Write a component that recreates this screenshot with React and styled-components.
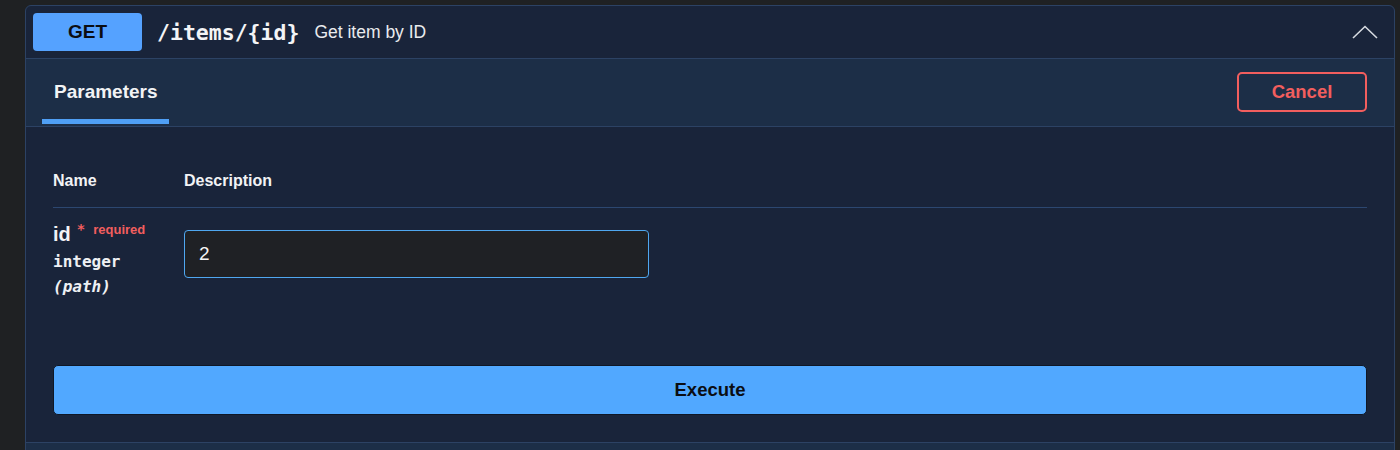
import React from 'react';
import styled, { createGlobalStyle } from 'styled-components';

const GlobalStyle = createGlobalStyle`
  html, body {
    margin: 0;
    padding: 0;
    background: #1f2123;
  }
  body {
    font-family: "Liberation Sans", Arial, sans-serif;
  }
`;

const Page = styled.div`
  padding: 5px 5px 0 25px;
  height: 450px;
  box-sizing: border-box;
  overflow: hidden;
`;

const Card = styled.div`
  border: 1px solid #2c4264;
  border-radius: 6px;
  background: #19243a;
  overflow: hidden;
`;

const Header = styled.div`
  display: flex;
  align-items: center;
  height: 52px;
  padding: 0 16px 0 7px;
  border-bottom: 1px solid #2c4264;
`;

const MethodBadge = styled.div`
  width: 109px;
  height: 38px;
  display: flex;
  align-items: center;
  justify-content: center;
  background: #55a2ff;
  border-radius: 4px;
  color: #0b0d12;
  font-weight: 700;
  font-size: 19px;
`;

const Path = styled.span`
  margin-left: 15px;
  font-family: "DejaVu Sans Mono", "Liberation Mono", monospace;
  font-weight: 700;
  font-size: 21.5px;
  color: #f3f4f6;
`;

const Summary = styled.span`
  margin-left: 15px;
  font-size: 17.5px;
  color: #e9ebee;
`;

const Chevron = styled.svg`
  margin-left: auto;
  width: 26px;
  height: 14px;
`;

const TabBar = styled.div`
  display: flex;
  align-items: stretch;
  height: 67px;
  padding: 0 27px 0 16px;
  background: #1c2e47;
  border-bottom: 1px solid #2c4264;
`;

const Tab = styled.div`
  display: flex;
  align-items: center;
  padding: 5px 11px 0 12px;
  margin-bottom: 2px;
  font-weight: 700;
  font-size: 19px;
  color: #f2f3f5;
  border-bottom: 5px solid ${p => (p.$active ? '#4f9ff5' : 'transparent')};
`;

const CancelButton = styled.button`
  margin: 13px 0 0 auto;
  width: 130px;
  height: 40px;
  background: transparent;
  border: 2px solid #f25e5e;
  border-radius: 5px;
  color: #f25e5e;
  font-family: "Liberation Sans", Arial, sans-serif;
  font-weight: 700;
  font-size: 18.5px;
  cursor: pointer;
`;

const Body = styled.div`
  padding: 0 27px 27px 27px;
`;

const HeadRow = styled.div`
  display: grid;
  grid-template-columns: 131px 1fr;
  padding: 44px 0 16px;
  border-bottom: 1px solid #2c4770;
`;

const HeadCell = styled.div`
  font-weight: 700;
  font-size: 16px;
  line-height: 20px;
  color: #f2f3f5;
`;

const ParamRow = styled.div`
  display: grid;
  grid-template-columns: 131px 1fr;
  padding-top: 14px;
`;

const ParamInfo = styled.div`
  display: flex;
  flex-direction: column;
`;

const ParamName = styled.div`
  font-weight: 700;
  font-size: 20px;
  line-height: 24px;
  color: #f2f3f5;
`;

const Required = styled.span`
  position: relative;
  top: -7px;
  margin-left: 6px;
  font-size: 13px;
  font-weight: 700;
  color: #f25e5e;
`;

const Star = styled.span`
  font-family: "DejaVu Sans Mono", monospace;
  font-size: 14px;
  margin-right: 8px;
`;

const ParamType = styled.div`
  margin-top: 1px;
  font-family: "DejaVu Sans Mono", "Liberation Mono", monospace;
  font-weight: 700;
  font-size: 16px;
  line-height: 24px;
  color: #eef0f3;
  font-style: ${p => (p.$italic ? 'italic' : 'normal')};
`;

const ValueInput = styled.input`
  margin-top: 8px;
  width: 465px;
  height: 48px;
  box-sizing: border-box;
  padding: 0 14px;
  background: #1f2125;
  border: 1px solid #4fa7f0;
  border-radius: 4px;
  color: #f5f5f5;
  font-family: "Liberation Sans", Arial, sans-serif;
  font-size: 19px;
  outline: none;
  caret-color: #ffffff;
`;

const ExecuteButton = styled.button`
  display: block;
  width: 100%;
  height: 50px;
  margin-top: 66px;
  background: #51a8ff;
  border: 1px solid #0f1726;
  border-radius: 5px;
  color: #0b0d12;
  font-family: "Liberation Sans", Arial, sans-serif;
  font-weight: 700;
  font-size: 18.5px;
  cursor: pointer;
`;

const NextSection = styled.div`
  height: 40px;
  background: #1c2e47;
  border-top: 1px solid #2c4264;
`;

export default function App() {
  return (
    <>
      <GlobalStyle />
      <Page>
        <Card>
          <Header>
            <MethodBadge>GET</MethodBadge>
            <Path>/items/{'{id}'}</Path>
            <Summary>Get item by ID</Summary>
            <Chevron viewBox="0 0 26 14">
              <polyline points="1,13 13,1.5 25,13" fill="none" stroke="#d6dae0" strokeWidth="1.6" />
            </Chevron>
          </Header>
          <TabBar>
            <Tab $active>Parameters</Tab>
            <CancelButton>Cancel</CancelButton>
          </TabBar>
          <Body>
            <HeadRow>
              <HeadCell>Name</HeadCell>
              <HeadCell>Description</HeadCell>
            </HeadRow>
            <ParamRow>
              <ParamInfo>
                <ParamName>
                  id
                  <Required>
                    <Star>*</Star>required
                  </Required>
                </ParamName>
                <ParamType>integer</ParamType>
                <ParamType $italic>(path)</ParamType>
              </ParamInfo>
              <div>
                <ValueInput defaultValue="2" autoFocus />
              </div>
            </ParamRow>
            <ExecuteButton>Execute</ExecuteButton>
          </Body>
          <NextSection />
        </Card>
      </Page>
    </>
  );
}
